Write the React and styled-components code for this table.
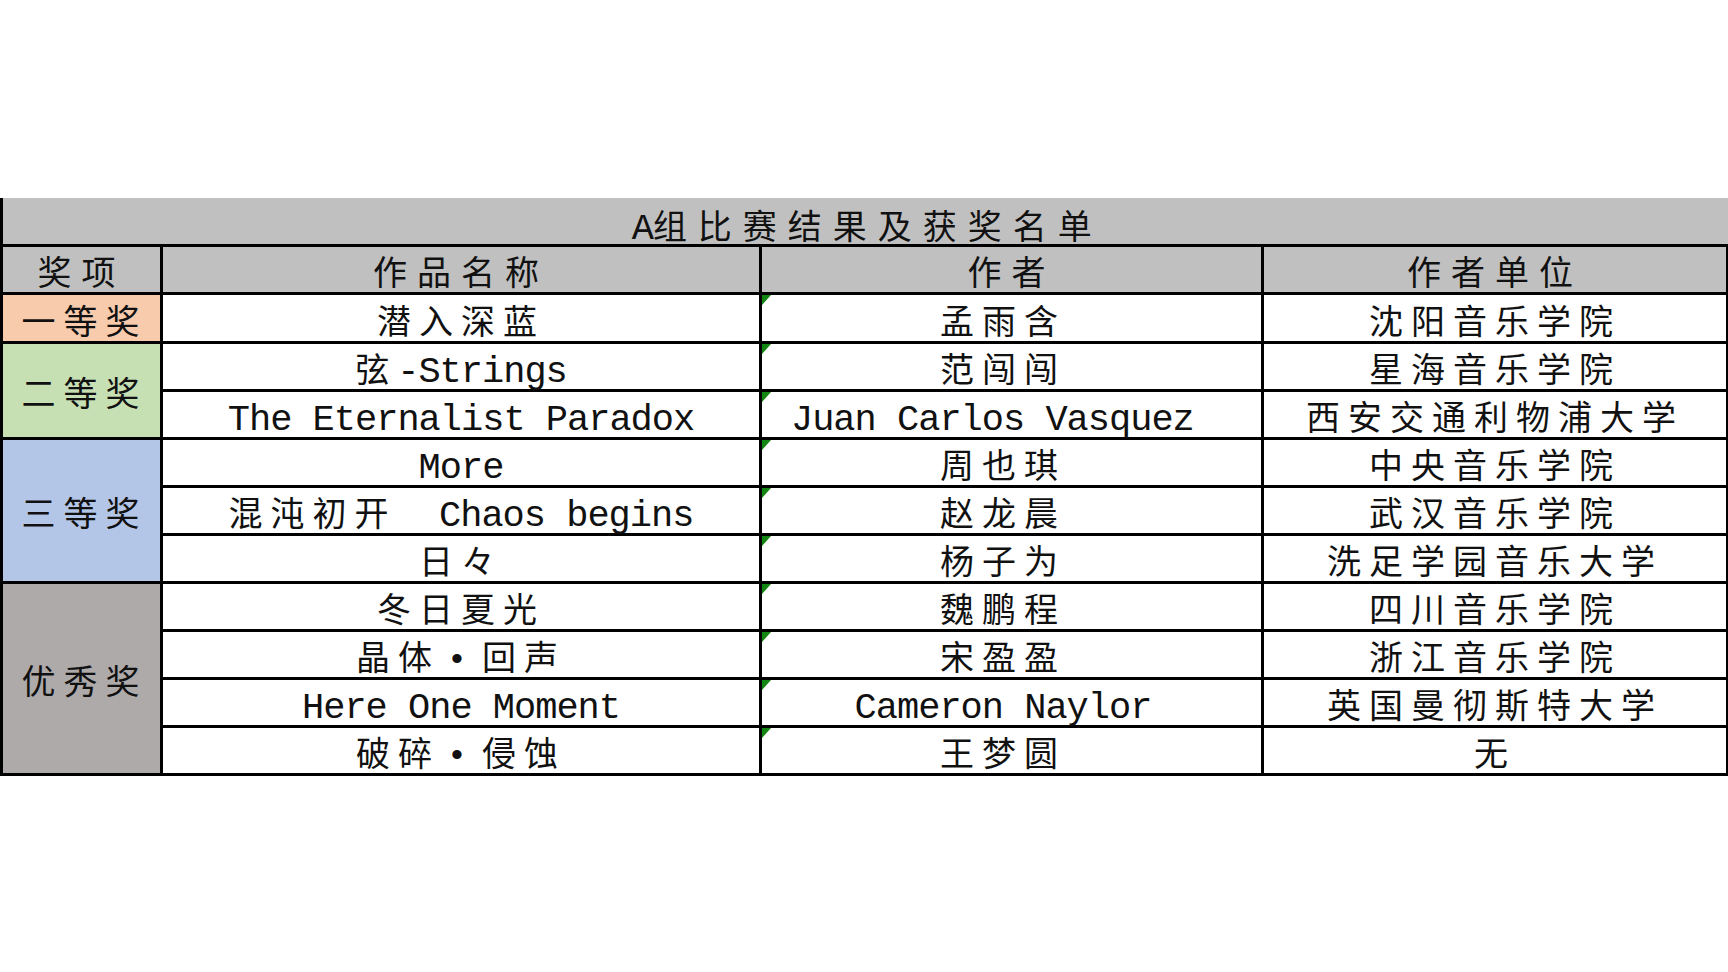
import React from 'react';
import styled, { createGlobalStyle } from 'styled-components';

const GlobalStyle = createGlobalStyle`
  html, body {
    margin: 0;
    padding: 0;
    background: #ffffff;
  }
  body {
    font-family: "Noto Sans CJK SC", "Liberation Mono", sans-serif;
    color: #111;
  }
`;

const awards = [
  {
    label: '一等奖',
    color: '#F8CBAD',
    rows: [['潜入深蓝', '孟雨含', '沈阳音乐学院']],
  },
  {
    label: '二等奖',
    color: '#C6E0B4',
    rows: [
      ['弦-Strings', '范闯闯', '星海音乐学院'],
      ['The Eternalist Paradox', 'Juan Carlos Vasquez ', '西安交通利物浦大学'],
    ],
  },
  {
    label: '三等奖',
    color: '#B4C6E7',
    rows: [
      ['More', '周也琪', '中央音乐学院'],
      ['混沌初开  Chaos begins', '赵龙晨', '武汉音乐学院'],
      ['日々', '杨子为', '洗足学园音乐大学'],
    ],
  },
  {
    label: '优秀奖',
    color: '#AEAAAA',
    rows: [
      ['冬日夏光', '魏鹏程', '四川音乐学院'],
      ['晶体•回声', '宋盈盈', '浙江音乐学院'],
      ['Here One Moment', 'Cameron Naylor', '英国曼彻斯特大学'],
      ['破碎•侵蚀', '王梦圆', '无'],
    ],
  },
];

// 中英文分段：英文走等宽字体，中文字距大一些，圆点占全角
function Mixed({ text, lh = 42 }) {
  const parts = text.match(/[\x20-\x7e]+|•|[^\x20-\x7e•]+/g) || [];
  return (
    <Content $lh={lh}>
      {parts.map((p, i) => {
        if (p === '•') return <Dot key={i}>•</Dot>;
        if (/[\x20-\x7e]/.test(p[0])) return <Latin key={i}>{p}</Latin>;
        return <Han key={i}>{p}</Han>;
      })}
    </Content>
  );
}

const App = () => {
  return (
    <>
      <GlobalStyle />
      <Page>
        <Sheet>
          <colgroup>
            <col style={{ width: 160 }} />
            <col style={{ width: 599 }} />
            <col style={{ width: 502 }} />
            <col style={{ width: 465 }} />
          </colgroup>
          <tbody>
            <Row $h={47}>
              <TitleCell colSpan={4}>
                <Mixed text="A组比赛结果及获奖名单" lh={46} />
              </TitleCell>
            </Row>
            <Row $h={48}>
              <HeadCell><Mixed text="奖项" /></HeadCell>
              <HeadCell><Mixed text="作品名称" /></HeadCell>
              <HeadCell><Mixed text="作者" /></HeadCell>
              <HeadCell><Mixed text="作者单位" /></HeadCell>
            </Row>
            {awards.map((group) =>
              group.rows.map((r, idx) => (
                <Row $h={48} key={group.label + idx}>
                  {idx === 0 && (
                    <AwardCell rowSpan={group.rows.length} $bg={group.color}>
                      <Mixed text={group.label} />
                    </AwardCell>
                  )}
                  <Cell><Mixed text={r[0]} /></Cell>
                  <AuthorCell>
                    <Marker />
                    <Mixed text={r[1]} />
                  </AuthorCell>
                  <Cell><Mixed text={r[2]} /></Cell>
                </Row>
              ))
            )}
          </tbody>
        </Sheet>
      </Page>
    </>
  );
};

export default App;

const Page = styled.div`
  width: 1728px;
  padding-top: 198px;
`;

const Sheet = styled.table`
  width: 1726px;
  table-layout: fixed;
  border-collapse: collapse;
`;

const Row = styled.tr`
  height: ${(p) => p.$h}px;
`;

const Cell = styled.td`
  position: relative;
  padding: 0;
  border: 3px solid #000;
  background: #fff;
  text-align: center;
  vertical-align: bottom;
  font-size: 34px;
  letter-spacing: 8px;
`;

const Content = styled.div`
  height: 42px;
  line-height: ${(p) => p.$lh}px;
  white-space: pre;
`;

const HeadCell = styled(Cell)`
  background: #c0c0c0;
  letter-spacing: 10px;
`;

const TitleCell = styled(Cell)`
  background: #c0c0c0;
  border-top: none;
  border-right: none;
  letter-spacing: 11px;
  padding-left: 4px;
`;

const AwardCell = styled(Cell)`
  background: ${(p) => p.$bg};
  vertical-align: middle;
  padding: 4px 0 0 6px;
`;

const AuthorCell = styled(Cell)`
  padding-right: 17px;
`;

const Han = styled.span`
  font-family: "Noto Sans CJK SC", sans-serif;
`;

const Latin = styled.span`
  font-family: "Liberation Mono", monospace;
  font-size: 37px;
  line-height: 1;
  letter-spacing: -1px;
`;

const Dot = styled.span`
  display: inline-block;
  width: 34px;
  margin-right: 8px;
  letter-spacing: 0;
  line-height: 1;
  text-align: center;
  font-family: "Liberation Sans", sans-serif;
`;

const Marker = styled.span`
  position: absolute;
  top: 0;
  left: 0;
  width: 0;
  height: 0;
  border-top: 10px solid #128512;
  border-right: 9px solid transparent;
`;
